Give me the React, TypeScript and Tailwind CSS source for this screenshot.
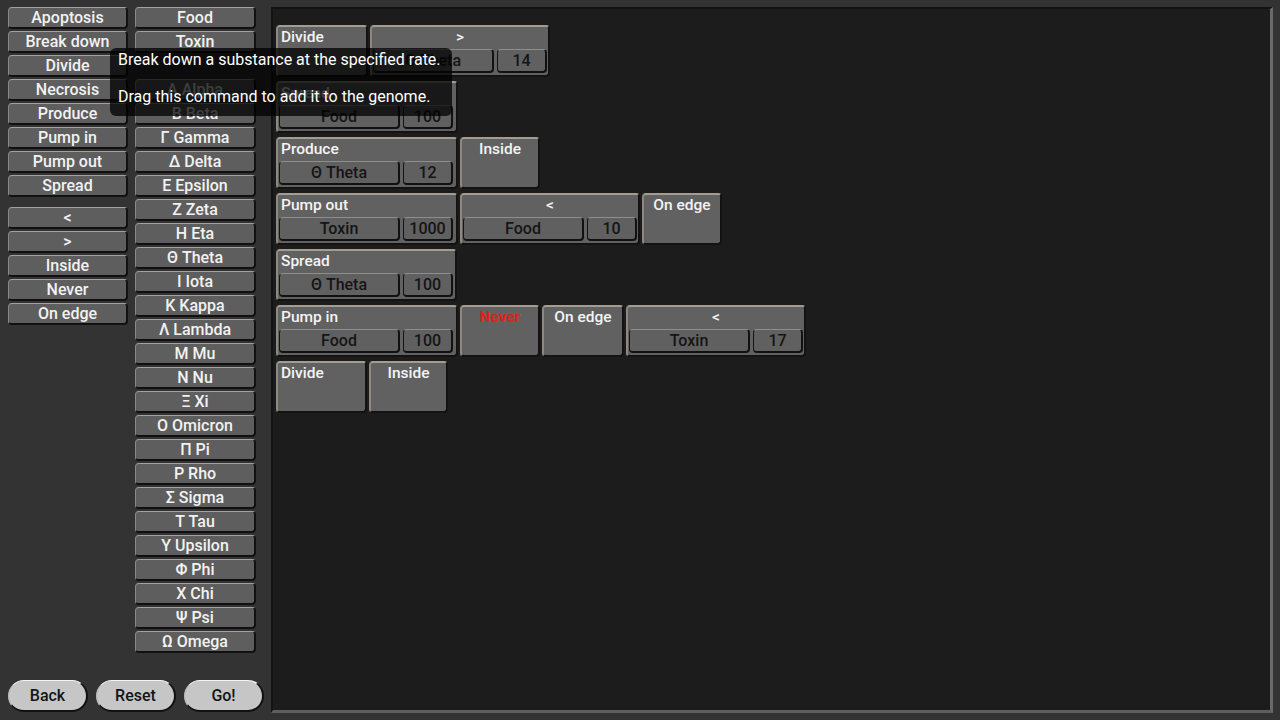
import React from "react";

const leftCommands = ["Apoptosis", "Break down", "Divide", "Necrosis", "Produce", "Pump in", "Pump out", "Spread"];
const leftConditions = ["<", ">", "Inside", "Never", "On edge"];
const substances = ["Food", "Toxin"];
const greek = [
  "Α Alpha", "Β Beta", "Γ Gamma", "Δ Delta", "Ε Epsilon", "Ζ Zeta", "Η Eta", "Θ Theta",
  "Ι Iota", "Κ Kappa", "Λ Lambda", "Μ Mu", "Ν Nu", "Ξ Xi", "Ο Omicron", "Π Pi",
  "Ρ Rho", "Σ Sigma", "Τ Tau", "Υ Upsilon", "Φ Phi", "Χ Chi", "Ψ Psi", "Ω Omega",
];

function SideButton({ label }: { label: string }) {
  return (
    <div className="h-[22px] mb-[2px] pt-[1px] rounded-[4px] bg-[#5e5e5e] border border-t-[#a8a196] border-l-[#8d877f] border-r-2 border-b-2 border-r-[#111] border-b-[#111] flex items-center justify-center text-[16px] leading-none font-medium text-[#f2f2f2]">
      {label}
    </div>
  );
}

function Arg({ text, w }: { text: string; w: string }) {
  return (
    <div className={`${w} h-[24px] rounded-[4px] bg-[#606060] border border-t-[#8e8e8e] border-l-[#151515] border-r-2 border-b-2 border-r-[#111] border-b-[#111] flex items-center justify-center text-[16px] leading-none font-medium text-[#151515]`}>
      {text}
    </div>
  );
}

type BlockProps = {
  label: string;
  w: string;
  center?: boolean;
  red?: boolean;
  args?: [string, string];
};

function Block({ label, w, center, red, args }: BlockProps) {
  return (
    <div className={`${w} h-[52px] mr-[2px] shrink-0 rounded-[4px] bg-[#616161] border-t-2 border-l-2 border-t-[#a49c90] border-l-[#8f887e] border-r-2 border-b-2 border-r-[#131313] border-b-[#131313] flex flex-col`}>
      <div
        className={`h-[20px] pt-[2px] px-[3px] text-[15.5px] leading-[16px] ${center ? "text-center" : ""} ${red ? "text-[#e0201c] font-bold" : "text-[#f4f4f4] font-medium"}`}
      >
        {label}
      </div>
      {args && (
        <div className="flex gap-[3px] pl-[1px] mt-[2px]">
          <Arg text={args[0]} w="w-[121px]" />
          <Arg text={args[1]} w="w-[50px]" />
        </div>
      )}
    </div>
  );
}

function Row({ children }: { children: React.ReactNode }) {
  return <div className="flex mb-[4px]">{children}</div>;
}

function PillButton({ label }: { label: string }) {
  return (
    <div className="w-[80px] h-[32px] rounded-full bg-[#c6c6c6] border-t border-l border-t-[#f4f4f4] border-l-[#bbb] border-r-2 border-b-2 border-r-[#111] border-b-[#111] flex items-center justify-center text-[16px] font-medium text-[#141414]">
      {label}
    </div>
  );
}

export default function App() {
  return (
    <div className="relative w-[1280px] h-[720px] bg-[#333333] flex overflow-hidden font-['Roboto','Liberation_Sans',sans-serif]">
      {/* Palette */}
      <div className="w-[271px] h-full shrink-0 flex flex-col pl-[8px] pt-[7px]">
        <div className="flex gap-[7px]">
          <div className="w-[120px]">
            {leftCommands.map((c) => (
              <SideButton key={c} label={c} />
            ))}
            <div className="h-[8px]" />
            {leftConditions.map((c) => (
              <SideButton key={c} label={c} />
            ))}
          </div>
          <div className="w-[121px]">
            {substances.map((c) => (
              <SideButton key={c} label={c} />
            ))}
            <div className="h-[24px]" />
            {greek.map((c) => (
              <SideButton key={c} label={c} />
            ))}
          </div>
        </div>
        <div className="mt-auto mb-[8px] flex gap-[8px]">
          <PillButton label="Back" />
          <PillButton label="Reset" />
          <PillButton label="Go!" />
        </div>
      </div>

      {/* Genome */}
      <div className="flex-1 mt-[7px] mb-[7px] mr-[7px] bg-[#1c1c1c] border-t-2 border-l-2 border-t-[#101316] border-l-[#101316] border-r-[3px] border-b-[3px] border-r-[#6a6a6a] border-b-[#5e5e5e] pl-[3px] pt-[16px]">
        <Row>
          <Block label="Divide" w="w-[92px]" />
          <Block label=">" w="w-[180px]" center args={["Θ Theta", "14"]} />
        </Row>
        <Row>
          <Block label="Spread" w="w-[182px]" args={["Food", "100"]} />
        </Row>
        <Row>
          <Block label="Produce" w="w-[182px]" args={["Θ Theta", "12"]} />
          <Block label="Inside" w="w-[80px]" center />
        </Row>
        <Row>
          <Block label="Pump out" w="w-[182px]" args={["Toxin", "1000"]} />
          <Block label="<" w="w-[180px]" center args={["Food", "10"]} />
          <Block label="On edge" w="w-[80px]" center />
        </Row>
        <Row>
          <Block label="Spread" w="w-[181px]" args={["Θ Theta", "100"]} />
        </Row>
        <Row>
          <Block label="Pump in" w="w-[182px]" args={["Food", "100"]} />
          <Block label="Never" w="w-[80px]" center red />
          <Block label="On edge" w="w-[82px]" center />
          <Block label="<" w="w-[180px]" center args={["Toxin", "17"]} />
        </Row>
        <Row>
          <Block label="Divide" w="w-[91px]" />
          <Block label="Inside" w="w-[79px]" center />
        </Row>
      </div>

      {/* Tooltip */}
      <div className="absolute left-[110px] top-[48px] w-[342px] h-[68px] rounded-[6px] bg-black/75 pl-[8px] pt-[3px] text-[16px] leading-[18.5px] text-white">
        <div>Break down a substance at the specified rate.</div>
        <div className="h-[18.5px]" />
        <div>Drag this command to add it to the genome.</div>
      </div>
    </div>
  );
}
